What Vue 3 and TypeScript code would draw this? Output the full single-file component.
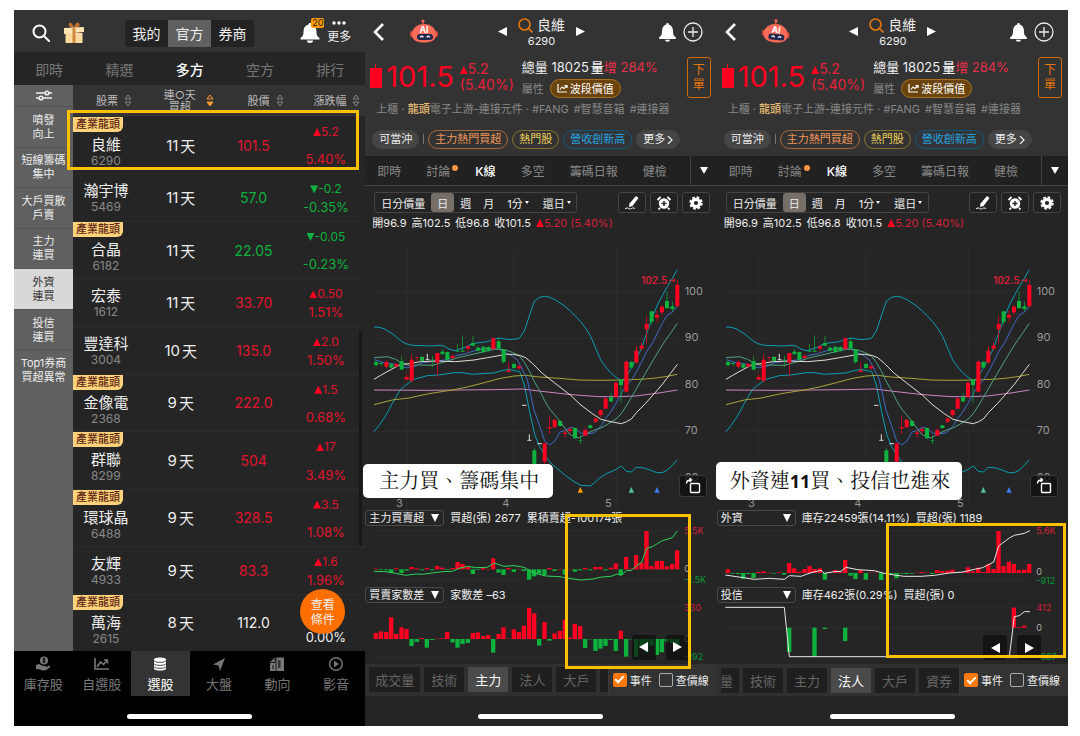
<script setup lang="ts">
import { reactive, ref } from 'vue'

interface Stock {
  name: string
  code: string
  days: string
  price: string
  diff: string
  pct: string
  dir: 'up' | 'down' | 'flat'
  leader?: boolean
  marked?: boolean
}

const groups = ['我的', '官方', '券商']
const activeGroup = ref('官方')
const modes = ['即時', '精選', '多方', '空方', '排行']
const activeMode = ref('多方')
const filters = [
  ['噴發', '向上'],
  ['短線籌碼', '集中'],
  ['大戶買散', '戶賣'],
  ['主力', '連買'],
  ['外資', '連買'],
  ['投信', '連買'],
  ['Top1券商', '買超異常'],
]
const activeFilter = ref(4)

const stocks: Stock[] = [
  { name: '良維', code: '6290', days: '11', price: '101.5', diff: '5.2', pct: '5.40%', dir: 'up', leader: true, marked: true },
  { name: '瀚宇博', code: '5469', days: '11', price: '57.0', diff: '-0.2', pct: '-0.35%', dir: 'down' },
  { name: '合晶', code: '6182', days: '11', price: '22.05', diff: '-0.05', pct: '-0.23%', dir: 'down', leader: true },
  { name: '宏泰', code: '1612', days: '11', price: '33.70', diff: '0.50', pct: '1.51%', dir: 'up' },
  { name: '豐達科', code: '3004', days: '10', price: '135.0', diff: '2.0', pct: '1.50%', dir: 'up' },
  { name: '金像電', code: '2368', days: '9', price: '222.0', diff: '1.5', pct: '0.68%', dir: 'up', leader: true },
  { name: '群聯', code: '8299', days: '9', price: '504', diff: '17', pct: '3.49%', dir: 'up', leader: true },
  { name: '環球晶', code: '6488', days: '9', price: '328.5', diff: '3.5', pct: '1.08%', dir: 'up', leader: true },
  { name: '友輝', code: '4933', days: '9', price: '83.3', diff: '1.6', pct: '1.96%', dir: 'up' },
  { name: '萬海', code: '2615', days: '8', price: '112.0', diff: '', pct: '0.00%', dir: 'flat', leader: true },
]

const navItems = ['庫存股', '自選股', '選股', '大盤', '動向', '影音']
const activeNav = ref('選股')

/* Chart units are thirds of a pixel; one column per trading day. */
const colX = (i: number) => 51 + Math.round(i * 15.32)

type Candle = ['r' | 'g', number, number, number, number] | null
const candles: Candle[] = [
  ['g', 376, 381, 390, 396], ['g', 382, 384, 387, 392], ['r', 375, 381, 395, 400], ['g', 384, 388, 398, 400],
  ['r', 385, 387, 394, 398], ['g', 364, 378, 404, 404], ['r', 415, 426, 434, 434], ['r', 357, 374, 437, 442],
  ['r', 366, 367, 369, 378], ['g', 362, 366, 378, 380], null, ['g', 362, 374, 376, 396],
  ['r', 353, 354, 383, 427], ['g', 343, 350, 357, 360], ['g', 350, 351, 374, 376], ['r', 356, 363, 369, 372],
  ['g', 327, 348, 350, 350], ['g', 301, 347, 350, 350], ['r', 330, 334, 341, 350], ['g', 303, 324, 332, 334],
  ['g', 333, 338, 347, 350], ['g', 334, 335, 351, 354], ['g', 334, 336, 347, 350], ['r', 306, 310, 342, 344],
  ['g', 309, 319, 341, 342], ['g', 341, 342, 381, 387], ['r', 382, 407, 411, 412], ['g', 382, 387, 399, 402],
  ['r', 388, 394, 400, 404], null, null, ['g', 638, 646, 690, 690],
  null, ['r', 624, 625, 680, 690], ['r', 543, 576, 580, 597], ['r', 550, 555, 577, 578],
  ['g', 555, 558, 573, 574], ['r', 585, 593, 597, 610], ['r', 577, 583, 588, 596], ['g', 577, 579, 610, 612],
  ['g', 604, 615, 617, 627], ['r', 578, 585, 602, 603], ['g', 570, 571, 579, 582], ['r', 547, 551, 560, 564],
  ['r', 524, 525, 540, 546], ['r', 486, 491, 521, 522], ['g', 474, 487, 499, 501], ['r', 440, 443, 485, 487],
  ['g', 432, 434, 450, 503], ['r', 377, 380, 470, 472], ['g', 379, 381, 398, 399], ['r', 333, 347, 382, 387],
  ['r', 321, 332, 341, 346], ['r', 243, 267, 283, 326], ['g', 227, 229, 260, 268], ['r', 226, 240, 248, 262],
  ['r', 211, 215, 232, 240], ['g', 170, 198, 219, 222], ['g', 200, 214, 222, 230], ['r', 134, 150, 214, 215],
]

const lines = [
  { cls: 'band', pts: '45,276 60,277 75,281 90,290 105,300 125,317 140,326 160,331 220,333 240,331 255,333 270,342 285,347 300,344 320,336 340,326 360,323 385,320 400,314 420,309 450,314 480,311 496,288 512,240 527,197 542,187 557,184 573,187 588,194 603,204 618,214 635,229 650,244 665,260 680,280 696,306 710,340 726,376 740,396 755,413 771,427 787,436 800,430 815,402 830,375 845,345 862,298 880,247 895,210 910,182 925,155 940,130 955,104' },
  { cls: 'band', pts: '45,590 60,572 80,542 100,505 125,463 150,443 165,433 205,422 240,420 285,413 310,413 340,418 385,415 405,414 425,408 450,403 482,410 496,450 512,530 527,598 542,635 557,660 573,682 590,697 620,722 645,740 665,751 695,753 725,727 742,716 770,704 787,693 802,709 817,711 832,697 850,698 870,704 893,713 910,713 925,705 940,691 955,674' },
  { cls: 'pink', pts: '45,465 200,466 400,464 490,462 540,468 600,475 650,480 720,485 780,485 830,483 860,479 900,474 955,465' },
  { cls: 'yellow', pts: '45,509 100,495 150,489 210,476 280,465 325,456 380,442 420,431 465,423 500,421 540,426 600,430 660,435 720,436 800,435 860,432 890,429 925,424 955,418' },
  { cls: 'blue', pts: '45,374 80,384 110,388 130,396 145,398 165,395 190,383 235,378 265,374 290,362 320,356 345,348 375,341 400,340 420,343 435,350 460,363 475,375 490,403 505,435 525,525 543,575 557,618 572,630 588,618 603,591 618,587 635,577 650,581 665,594 680,597 705,594 725,575 740,550 756,530 771,505 787,475 802,452 817,436 833,410 848,380 863,350 880,325 895,295 910,265 925,240 940,232 955,215' },
  { cls: 'teal', pts: '45,368 85,365 110,373 125,382 150,392 175,390 220,391 260,380 300,367 345,357 375,350 410,342 435,344 460,352 480,361 496,382 512,410 527,442 542,467 557,497 572,522 588,541 603,558 618,580 632,598 650,606 662,608 680,597 700,588 730,577 756,562 771,552 787,536 802,512 817,488 848,434 879,381 910,330 940,287 955,265' },
  { cls: 'cream', pts: '45,433 65,421 90,407 105,399 125,388 150,386 185,380 230,378 290,380 345,375 385,368 420,362 440,358 460,358 485,362 500,368 520,385 550,415 600,454 635,481 663,508 700,536 726,553 750,559 787,566 803,560 817,552 833,532 860,505 885,477 910,448 935,415 955,388' },
]

interface Panel {
  name: string
  stats: string[]
  top: number
  zero: number
  grid: number[]
  labels: { text: string; y: number; cls: string }[]
  bars: number[]
  line?: string
  lineCls?: string
}

interface Phone {
  key: string
  caption: string[]
  panels: Panel[]
  tab: string
  orangeMark: boolean
}

const phones: Phone[] = [
  {
    key: 'main',
    caption: ['主力買、籌碼集中'],
    tab: '主力',
    orangeMark: true,
    panels: [
      {
        name: '主力買賣超',
        stats: ['買超(張) 2677', '累積賣超-100174張'],
        top: 78,
        zero: 208,
        grid: [92, 208, 240],
        labels: [
          { text: '5.5K', y: 92, cls: 'up' },
          { text: '0', y: 208, cls: 'mid' },
          { text: '-1.5K', y: 240, cls: 'down' },
        ],
        bars: [2, -2, -3, -10, 3, -11, -4, 7, 3, -3, 4, -3, 10, 5, -2, 4, 22, 16, 8, -14, -2, 5, 1, 33, -10, -17, 4, -8, 1, -5, -31, -21, -13, -18, 4, -5, 1, -16, 1, -7, -3, 4, -3, 7, 7, -3, 5, 18, -17, 37, 2, 43, 20, 115, 10, 25, 25, 9, 16, 57],
        line: '45,214 80,215 110,220 140,226 170,222 190,223 220,219 250,215 280,214 300,205 325,199 350,203 385,202 405,189 435,199 465,197 495,202 515,214 530,220 560,228 600,230 630,235 665,240 700,237 730,231 756,229 775,222 787,226 802,212 817,211 833,197 848,187 863,145 880,140 895,131 910,122 940,113 955,93',
        lineCls: 'lime',
      },
      {
        name: '買賣家數差',
        stats: ['家數差 –63'],
        top: 309,
        zero: 417,
        grid: [322, 417, 472],
        labels: [
          { text: '330', y: 324, cls: 'up' },
          { text: '0', y: 417, cls: 'mid' },
          { text: '-192', y: 472, cls: 'down' },
        ],
        bars: [18, 23, 21, 65, 15, 35, 30, -21, -9, 3, -26, -3, 1, 2, 21, -10, -26, -15, -12, 18, 20, 9, 12, -41, 15, 35, 1, 29, 21, 40, 93, 77, -20, 51, -5, 17, 24, 58, 4, 45, 39, -27, -1, -36, -29, -21, -3, -36, 25, -53, -1, -53, -25, -40, -20, -48, -40, -8, -12, -22],
      },
    ],
  },
  {
    key: 'inst',
    caption: ['外資連', '11', '買、投信也進來'],
    tab: '法人',
    orangeMark: false,
    panels: [
      {
        name: '外資',
        stats: ['庫存22459張(14.11%)', '買超(張) 1189'],
        top: 78,
        zero: 219,
        grid: [92, 219, 240],
        labels: [
          { text: '5.6K', y: 93, cls: 'up' },
          { text: '0', y: 217, cls: 'mid' },
          { text: '-912', y: 242, cls: 'down' },
        ],
        bars: [11, -2, -3, -17, -3, -15, 3, 5, 1, -2, 2, -5, 30, 14, 4, 12, 21, 12, 14, -20, 2, 9, 3, 39, -8, -18, 9, -20, 1, 1, -21, -2, -3, -16, -2, -3, -2, 1, 3, 1, -3, 9, 6, 7, 10, 2, 2, 17, 5, 16, 3, 27, 12, 126, 21, 34, 27, 9, 10, 27],
        line: '43,225 90,232 130,238 175,235 220,238 235,227 270,229 300,218 330,211 340,220 370,215 390,214 405,202 440,209 490,212 520,220 550,225 580,229 630,229 670,226 715,219 756,216 790,208 815,203 848,186 863,138 895,114 910,106 940,100 957,92',
        lineCls: 'white',
      },
      {
        name: '投信',
        stats: ['庫存462張(0.29%)', '買超(張) 0'],
        top: 309,
        zero: 383,
        grid: [322, 383, 472],
        labels: [
          { text: '412', y: 324, cls: 'up' },
          { text: '0', y: 384, cls: 'mid' },
          { text: '-607', y: 472, cls: 'down' },
        ],
        bars: Array.from({ length: 60 }, (_, i) => (({ 12: -73, 17: -86, 19: -4, 23: -40, 56: 60, 57: 2, 58: 6 }) as Record<number, number>)[i] ?? 0),
        line: '43,322 220,322 235,470 895,470 910,350 925,347 940,335 957,335',
        lineCls: 'white',
      },
    ],
  },
]

const pageTabs = ['即時', '討論', 'K線', '多空', '籌碼日報', '健檢']
const ranges = ['日分價量', '日', '週', '月', '1分', '還日']
const panelTabs = ['成交量', '技術', '主力', '法人', '大戶', '資券']
const chips = [
  { text: '主力熱門買超', cls: 'orange' },
  { text: '熱門股', cls: 'gold' },
  { text: '營收創新高', cls: 'sky' },
]
const checks = reactive([
  { event: true, price: false },
  { event: true, price: false },
])
const barY = (v: number, zero: number) => (v > 0 ? zero - v : zero)
</script>

<template>
  <main class="board">
    <section class="phone list-phone">
      <header class="bar">
        <button class="ico" aria-label="搜尋">
          <svg width="18" height="18" viewBox="0 0 18 18" fill="none" stroke="#fff" stroke-width="2"><circle cx="7.5" cy="7.5" r="6" /><path d="M12 12l5 5" stroke-linecap="round" /></svg>
        </button>
        <button class="ico gift" aria-label="禮物">
          <svg width="20" height="22" viewBox="0 0 20 22">
            <path d="M10 6C7 6 4 4 5 1.500S9 2 10 6c1-4 3-7 5-4.500S14 6 10 6z" fill="#c4732c" />
            <path d="M1.500 11h17v10h-17z" fill="#fbd9a0" /><path d="M0 6l20-1v5l-20 2z" fill="#ffe3b3" />
            <path d="M8.500 6h3v15h-3z" fill="#d08a3e" />
          </svg>
        </button>
        <div class="segments">
          <button v-for="g in groups" :key="g" :class="{ on: g === activeGroup }" @click="activeGroup = g">{{ g }}</button>
        </div>
        <button class="ico alert" aria-label="通知">
          <svg width="20" height="20" viewBox="0 0 20 20" fill="#fff"><path d="M10 0c1 0 1.500.7 1.500 1.500C15 2.400 16.500 5 16.500 9c0 3.500 1 4.500 3 6v1.500H.5V15c2-1.500 3-2.500 3-6 0-4 1.500-6.600 5-7.500C8.500.7 9 0 10 0zM7 17.500h6a3 2.500 0 0 1-6 0z" /></svg>
          <span class="count">20</span>
        </button>
        <button class="more">
          <svg width="14" height="4" viewBox="0 0 14 4" fill="#fff"><circle cx="2" cy="2" r="1.700" /><circle cx="7" cy="2" r="1.700" /><circle cx="12" cy="2" r="1.700" /></svg>
          <span>更多</span>
        </button>
      </header>
      <nav class="modes">
        <button v-for="m in modes" :key="m" :class="{ on: m === activeMode }" @click="activeMode = m">{{ m }}</button>
      </nav>
      <div class="body">
        <aside class="side">
          <button class="tune" aria-label="篩選">
            <svg width="16" height="11" viewBox="0 0 16 11" fill="none" stroke="#eee" stroke-width="1.500"><path d="M0 3h9M13 3h3M0 8h3M7 8h9" /><circle cx="11" cy="3" r="1.800" /><circle cx="5" cy="8" r="1.800" /></svg>
          </button>
          <div class="filters">
            <button v-for="(f, i) in filters" :key="i" :class="{ on: i === activeFilter }" @click="activeFilter = i">
              <span v-for="t in f" :key="t">{{ t }}</span>
            </button>
          </div>
        </aside>
        <div class="table-wrap">
          <table>
            <thead>
              <tr>
                <th v-for="(h, i) in [['股票'], ['連○天', '買超'], ['股價'], ['漲跌幅']]" :key="i" scope="col">
                  <span class="head-text"><span v-for="t in h" :key="t">{{ t }}</span></span>
                  <svg class="sort" :class="{ active: i === 1 }" width="8" height="13" viewBox="0 0 8 13"><path class="asc" d="M1 5l3-4 3 4z" /><path class="desc" d="M1 8l3 4 3-4z" /></svg>
                </th>
              </tr>
            </thead>
            <tbody>
              <tr v-for="s in stocks" :key="s.code" :class="[s.dir, { leader: s.leader, marked: s.marked }]">
                <td class="who">
                  <span v-if="s.leader" class="badge">產業龍頭</span>
                  <span class="name">{{ s.name }}</span>
                  <span class="code">{{ s.code }}</span>
                </td>
                <td class="days">{{ s.days }}<span>天</span></td>
                <td class="price">{{ s.price }}</td>
                <td class="change">
                  <span class="diff"><template v-if="s.diff"><i class="tri" :class="s.dir"></i>{{ s.diff }}</template></span>
                  <span>{{ s.pct }}</span>
                </td>
              </tr>
            </tbody>
          </table>
          <span class="scroll"></span>
          <button class="fab"><span>查看</span><span>條件</span></button>
        </div>
      </div>
      <nav class="tabbar">
        <button v-for="(n, i) in navItems" :key="n" :class="{ on: n === activeNav }" @click="activeNav = n">
          <svg width="16" height="16" viewBox="0 0 16 16" fill="currentColor">
            <template v-if="i === 0"><circle cx="9" cy="4.500" r="4" /><path d="M10.500 3c-2-1-3.500.7-1.500 1.500s.6 2.500-1.600 1.400M9 1.800v5.400" fill="none" stroke="#000" /><path d="M1 9l3-1 4 2h3v1.500H8c3 .5 4-1 6-2 1 0 1.500.8 1 1.500-2 2-4 3.500-6 3.500-3 0-4-1.500-8-1.500z" /></template>
            <path v-else-if="i === 1" d="M1 2v11h14M3 11l3.500-5 3 2.500L13 4.500M10 4h3.500v3.500" fill="none" stroke="currentColor" stroke-width="1.600" />
            <template v-else-if="i === 2"><path d="M2 3.500C2 .7 14 .7 14 3.500v9c0 2.800-12 2.800-12 0z" /><path d="M2 4.500c0 2.500 12 2.500 12 0M2 7.500c0 2.500 12 2.500 12 0M2 10.500c0 2.500 12 2.500 12 0" fill="none" stroke="#333" stroke-width=".9" /></template>
            <path v-else-if="i === 3" d="M14 2L2 8.500l5.500 1L9 15z" />
            <template v-else-if="i === 4"><path d="M1 6l5-4.500h9V15H1z" /><path d="M7 1v14M1 6.500h5V2" fill="none" stroke="#000" stroke-width=".8" /><path d="M9 4h2.500v8H9z" fill="#333" /><path d="M3 9h2v4H3z" fill="#444" /></template>
            <template v-else><circle cx="8" cy="8" r="6.300" fill="none" stroke="currentColor" stroke-width="1.400" /><path d="M6 4.700l5 3.300-5 3.300z" /></template>
          </svg>
          <span>{{ n }}</span>
        </button>
      </nav>
      <div class="home black"><span></span></div>
    </section>

    <section v-for="(p, pi) in phones" :key="p.key" class="phone detail" :class="p.key">
      <header class="bar">
        <button class="ico" aria-label="返回">
          <svg width="12" height="18" viewBox="0 0 12 18" fill="none" stroke="#fff" stroke-width="2.600"><path d="M10 1L2 9l8 8" /></svg>
        </button>
        <button class="ico robot" aria-label="AI">
          <svg width="28" height="24" viewBox="0 0 28 24">
            <circle cx="13" cy="2" r="1.600" fill="#ff6152" /><path d="M13 3v4" stroke="#ff6152" stroke-width="1.200" />
            <rect x="0" y="12" width="4" height="6" rx="2" fill="#d64a40" /><rect x="24" y="12" width="4" height="6" rx="2" fill="#d64a40" />
            <path d="M14 5c7 0 12 4.500 12 10.500 0 6-5 8-12 8S2 21.500 2 15.500C2 9.500 7 5 14 5z" fill="#ff6b57" />
            <text x="14" y="14" text-anchor="middle" class="ai">AI</text>
            <rect x="7" y="15" width="16" height="6" rx="3" fill="#23284f" />
            <path d="M10.500 18.500a1.300 1.300 0 0 1 2.600 0M17 18.500a1.300 1.300 0 0 1 2.600 0" fill="none" stroke="#fff" stroke-width="1.300" />
          </svg>
        </button>
        <div class="title">
          <button class="ico" aria-label="上一檔"><svg width="10" height="10" viewBox="0 0 10 10" fill="#fff"><path d="M9 0v9L0 4.500z" /></svg></button>
          <div class="who-now">
            <div class="who-name">
              <svg width="15" height="15" viewBox="0 0 15 15" fill="none" stroke="#e8760a" stroke-width="1.600"><circle cx="6.500" cy="6.500" r="5.500" /><path d="M10.500 10.500l4 4" /></svg>
              <span>良維</span>
            </div>
            <span class="who-code">6290</span>
          </div>
          <button class="ico" aria-label="下一檔"><svg width="10" height="10" viewBox="0 0 10 10" fill="#fff"><path d="M1 0v9l9-4.500z" /></svg></button>
        </div>
        <button class="ico" aria-label="通知">
          <svg width="17" height="19" viewBox="0 0 17 19" fill="#fff"><path d="M8.500 0c.8 0 1.300.6 1.300 1.400 3 .8 4.200 3.300 4.200 7 0 3.200.8 4.400 2.800 5.800V16H.2v-1.800C2.200 12.800 3 11.600 3 8.400c0-3.700 1.200-6.200 4.200-7C7.200.6 7.700 0 8.500 0zM6 16.700h5a2.500 2 0 0 1-5 0z" /></svg>
        </button>
        <button class="ico" aria-label="加入">
          <svg width="20" height="20" viewBox="0 0 20 20" fill="none" stroke="#eee" stroke-width="1.300"><circle cx="10" cy="10" r="9" /><path d="M10 5v10M5 10h10" /></svg>
        </button>
      </header>

      <div class="quote">
        <svg class="candle" width="12" height="26" viewBox="0 0 12 26" fill="#ff0020"><path d="M0 4h12v20H0zM5 0h1v24H5z" /></svg>
        <strong>101.5</strong>
        <div class="move"><span><i class="tri up"></i>5.2</span><span>(5.40%)</span></div>
        <div class="facts">
          <div class="volume">總量 18025<b>量</b><em>增 284%</em></div>
          <div class="attr">
            <span>屬性</span>
            <button class="value-pill">
              <svg width="11" height="9" viewBox="0 0 11 9" fill="none" stroke="#fff" stroke-width="1.200"><path d="M1 0v8h9M3 5.500l2-2.500 2 1.500L9.500 2M7.500 1.500H10V4" /></svg>
              波段價值
            </button>
          </div>
        </div>
        <button class="order"><span>下</span><span>單</span></button>
      </div>
      <div class="tagline"><span>上櫃 · <b>龍頭</b>電子上游-連接元件 · #FANG</span><span>#智慧音箱</span><span>#連接器</span></div>
      <div class="chips">
        <span class="chip solid">可當沖</span><span class="sep"></span>
        <button v-for="c in chips" :key="c.text" class="chip" :class="c.cls">{{ c.text }}</button>
        <button class="chip solid">更多 <svg width="6" height="8" viewBox="0 0 6 8" fill="none" stroke="#eee" stroke-width="1.200"><path d="M1 0l4 4-4 4" /></svg></button>
      </div>

      <nav class="page-tabs">
        <div class="page-items">
          <button v-for="t in pageTabs" :key="t" :class="{ on: t === 'K線', dot: t === '討論' }">{{ t }}</button>
        </div>
        <button class="fold" aria-label="展開"><svg width="8" height="7" viewBox="0 0 8 7" fill="#fff"><path d="M0 0h8L4 7z" /></svg></button>
      </nav>

      <div class="tools">
        <div class="ranges">
          <button v-for="(r, i) in ranges" :key="r" :class="{ on: r === '日' }">{{ r }}<svg v-if="i > 3" width="4" height="3" viewBox="0 0 4 3" fill="#fff"><path d="M0 0h4L2 3z" /></svg></button>
        </div>
        <button class="tool" aria-label="畫線"><svg width="14" height="14" viewBox="0 0 14 14" fill="#fff"><path d="M11 0l2.500 2-6 8L4 11l.5-3.500z" /><path d="M0 13c3-3 4 1.500 6.500-.5 1.500-1 2-.5 3.500 0" fill="none" stroke="#fff" /></svg></button>
        <button class="tool" aria-label="鬧鐘"><svg width="14" height="14" viewBox="0 0 14 14" fill="#fff"><circle cx="7" cy="7.500" r="5.200" /><path d="M7 5v5M4.500 7.500h5" stroke="#222" stroke-width="1.400" /><path d="M.5 4L3.500 1M13.500 4l-3-3M3 12l-1.500 1.500M11 12l1.500 1.500" stroke="#fff" stroke-width="1.800" /></svg></button>
        <button class="tool" aria-label="設定"><svg width="14" height="14" viewBox="0 0 14 14"><circle cx="7" cy="7" r="3.700" fill="none" stroke="#fff" stroke-width="3.200" /><circle cx="7" cy="7" r="5.800" fill="none" stroke="#fff" stroke-width="1.800" stroke-dasharray="2.600 1.955" /></svg></button>
      </div>
      <div class="ohlc"><span>開96.9</span><span>高102.5</span><span>低96.8</span><span>收101.5</span><span class="rise"><i class="tri up"></i>5.20 (5.40%)</span></div>

      <div class="k-chart">
        <svg viewBox="18 0 1054 825">
          <path class="grid-line" d="M45 170H960M45 310H960M45 450H960M45 589H960M45 729H960M143 40V825M465 40V825M772 40V825" />
          <polyline v-for="(l, i) in lines" :key="i" class="curve" :class="l.cls" :points="l.pts" />
          <template v-for="(c, i) in candles" :key="i">
            <g v-if="c" :class="c[0]">
              <rect :x="colX(i) - 1" :y="c[1]" width="2" :height="c[4] - c[1]" />
              <rect :x="colX(i) - 6" :y="c[2]" width="12" :height="c[3] - c[2]" />
            </g>
          </template>
          <path class="doji" d="M205 356v17M200 374h11M489 511h14M511 598v17M505 616h12M535 626h14" />
          <path v-if="p.orangeMark" d="M656 773l8-17 8 17z" fill="#ff9800" />
          <path d="M809 773l8-17 8 17z" fill="#4fc3a1" />
          <path d="M886 773l8-17 8 17z" fill="#3f7ff0" />
          <text class="peak" x="846" y="146">102.5</text>
          <path class="arrow" d="M930 136h18M941 130l8 6-8 6" />
          <g class="axis">
            <text x="977" y="179">100</text><text x="977" y="319">90</text><text x="977" y="459">80</text><text x="977" y="598">70</text><text x="977" y="738">60</text>
            <text x="111" y="817">3</text><text x="430" y="817">4</text><text x="738" y="817">5</text>
          </g>
        </svg>
        <button class="rotate" aria-label="橫向檢視">
          <svg width="16" height="16" viewBox="0 0 16 16" fill="none" stroke="#fff" stroke-width="1.400"><rect x="5.500" y="5.500" width="9" height="9" rx="1" /><path d="M1.500 5.500C1.500 3 3 2 6 2M4.500 0l2 2-2 2" /></svg>
        </button>
        <div class="caption"><span v-for="t in p.caption" :key="t" :class="{ num: t === '11' }">{{ t }}</span></div>
      </div>

      <div class="panels">
        <div v-for="(n, ni) in p.panels" :key="n.name" class="panel">
          <div class="panel-head">
            <label class="pick">
              <select :aria-label="n.name"><option>{{ n.name }}</option></select>
              <svg width="8" height="8" viewBox="0 0 8 8" fill="#fff"><path d="M0 0h8L4 8z" /></svg>
            </label>
            <span v-for="s in n.stats" :key="s">{{ s }}</span>
          </div>
          <svg :viewBox="`18 ${n.top} 1054 183`">
            <path v-for="g in n.grid" :key="g" class="grid-line" :d="`M45 ${g}H960`" />
            <template v-for="(v, i) in n.bars" :key="i">
              <rect v-if="v" :class="v > 0 ? 'r' : 'g'" :x="colX(i) - 7" :y="barY(v, n.zero)" width="13" :height="Math.abs(v)" />
            </template>
            <polyline v-if="n.line" class="curve" :class="n.lineCls" :points="n.line" />
            <text v-for="l in n.labels" :key="l.text" class="scale" :class="l.cls" x="976" :y="l.y + 9">{{ l.text }}</text>
          </svg>
          <div v-if="ni === 1" class="pager">
            <button aria-label="往前"><svg width="9" height="10" viewBox="0 0 9 10" fill="#fff"><path d="M9 0v10L0 5z" /></svg></button>
            <button aria-label="往後"><svg width="9" height="10" viewBox="0 0 9 10" fill="#fff"><path d="M0 0v10l9-5z" /></svg></button>
          </div>
        </div>
        <span class="frame"></span>
      </div>

      <div class="panel-tabs">
        <div class="strip">
          <button v-for="t in panelTabs" :key="t" :class="{ on: t === p.tab }">{{ t }}</button>
        </div>
        <div class="checks">
          <label><input v-model="checks[pi].event" type="checkbox" />事件</label>
          <label><input v-model="checks[pi].price" type="checkbox" />查價線</label>
        </div>
      </div>
      <div class="home"><span></span></div>
    </section>
  </main>
</template>

<style>
body {
  margin: 0;
  background: #fff;
}
</style>

<style scoped>
.board {
  display: grid;
  grid-template-columns: repeat(3, minmax(0, 1fr));
  padding: 10px 12px 10px 14px;
  font-family: Inter, "Noto Sans CJK TC", sans-serif;
  color: #eee;
}
.board * {
  box-sizing: border-box;
}
.board svg {
  display: block;
  flex: none;
}
button {
  border: 0;
  padding: 0;
  background: none;
  color: inherit;
  font: inherit;
  white-space: nowrap;
  cursor: pointer;
}
.phone {
  display: flex;
  flex-direction: column;
  min-width: 0;
  background: #252525;
}
.bar {
  display: flex;
  align-items: center;
  height: 42px;
  background: #333;
}
.ico {
  position: relative;
  display: flex;
}
.tri {
  display: inline-block;
  width: 8px;
  height: 8px;
  background: #ff0020;
  clip-path: polygon(50% 0, 100% 100%, 0 100%);
}
.tri.down {
  background: #0db33c;
  clip-path: polygon(0 0, 100% 0, 50% 100%);
}

/* stock picker */
.list-phone .bar {
  padding: 4px 14px 0 18px;
}
.gift {
  margin-left: 14px;
}
.segments {
  display: flex;
  margin: 0 auto 0 41px;
  border-radius: 3px;
  overflow: hidden;
  background: #232323;
}
.segments button {
  width: 43px;
  height: 27px;
  font-size: 14px;
}
.segments .on {
  background: #606060;
}
.count {
  position: absolute;
  left: 11px;
  top: -5px;
  padding: 0 1px;
  border-radius: 2px;
  background: #f90;
  color: #222;
  font-size: 9px;
  line-height: 10px;
}
.more {
  display: flex;
  flex-direction: column;
  align-items: center;
  gap: 4px;
  margin-left: 7px;
  font-size: 12px;
  line-height: 16px;
}
.modes {
  display: grid;
  grid-template-columns: repeat(5, 1fr);
  height: 33px;
}
.modes button {
  color: #777;
  font-size: 14px;
}
.modes .on {
  color: #fff;
  font-weight: 500;
}
.body {
  display: flex;
  flex: 1;
}
.side {
  width: 59px;
  background: #606060;
}
.tune {
  display: grid;
  place-items: center;
  width: 100%;
  height: 21px;
}
.filters {
  display: grid;
  grid-template-rows: repeat(7, 1fr);
  height: 284px;
}
.filters button {
  display: flex;
  flex-direction: column;
  align-items: center;
  justify-content: center;
  border-top: 1px solid #555;
  font-size: 11px;
  line-height: 14px;
}
.filters .on {
  background: #d8d8d8;
  color: #333;
}
.table-wrap {
  position: relative;
  display: flex;
  flex: 1;
}
table,
tbody {
  display: flex;
  flex-direction: column;
  flex: 1;
}
thead {
  display: block;
}
tr {
  display: grid;
  grid-template-columns: 66fr 84fr 62fr 81fr;
}
thead tr {
  height: 31px;
  background: #333;
}
th {
  display: flex;
  align-items: center;
  justify-content: center;
  gap: 6px;
  padding: 0 0 0 16px;
  font-size: 11px;
  line-height: 12px;
  font-weight: 400;
  color: #bbb;
  white-space: nowrap;
}
th:nth-child(2) {
  gap: 10px;
}
th:nth-child(n + 3) {
  padding-left: 24px;
}
.head-text {
  display: flex;
  flex-direction: column;
  align-items: center;
}
.sort path {
  fill: none;
  stroke: #888;
}
.sort.active path {
  stroke: #f93;
}
.sort.active .desc {
  fill: #f93;
}
tbody tr {
  position: relative;
  flex: 48 0 0;
  border-top: 1px solid #2b2b2b;
}
tbody tr.leader {
  flex-grow: 58;
}
.marked::after {
  content: "";
  position: absolute;
  z-index: 2;
  inset: -7px 6px 3px -6px;
  border: 3px solid #ffc000;
}
td {
  display: flex;
  align-items: center;
  justify-content: center;
  padding: 0;
  font-size: 14px;
}
.who {
  flex-direction: column;
  justify-content: flex-start;
  padding-top: 8px;
}
.leader .who {
  padding-top: 0;
}
.badge {
  align-self: flex-start;
  margin-bottom: 4px;
  padding: 0 3px;
  border-radius: 0 0 6px 0;
  background: #fdd27a;
  color: #5c2413;
  font-size: 11px;
  line-height: 15px;
  font-weight: 500;
  white-space: nowrap;
}
.name {
  font-size: 15px;
  line-height: 18px;
}
.code {
  color: #888;
  font-size: 12px;
  line-height: 14px;
}
.days {
  gap: 2px;
  font-size: 15px;
}
.up .price,
.up .change {
  color: #e2142d;
}
.down .price,
.down .change {
  color: #0db33c;
}
.change {
  flex-direction: column;
  justify-content: space-between;
  padding: 7px 0 6px 2px;
  font-size: 13px;
  line-height: 16px;
}
.diff {
  min-height: 16px;
  font-size: 12px;
}
.scroll {
  position: absolute;
  right: 3px;
  top: 245px;
  width: 3px;
  height: 216px;
  border-radius: 2px;
  background: #181818;
}
.fab {
  position: absolute;
  right: 20px;
  bottom: 17px;
  display: flex;
  flex-direction: column;
  align-items: center;
  justify-content: center;
  width: 45px;
  height: 45px;
  border-radius: 50%;
  background: #ff6f00;
  font-size: 12px;
  line-height: 15px;
}
.tabbar {
  display: grid;
  grid-template-columns: repeat(6, 1fr);
  height: 45px;
  background: #000;
}
.tabbar button {
  display: flex;
  flex-direction: column;
  align-items: center;
  gap: 3px;
  padding-top: 5px;
  color: #777;
  font-size: 13px;
  line-height: 18px;
}
.tabbar .on {
  background: #333;
  color: #fff;
}
.home {
  display: flex;
  justify-content: center;
  height: 30px;
  padding-top: 18px;
}
.home.black {
  background: #000;
}
.home span {
  width: 125px;
  height: 5px;
  border-radius: 3px;
  background: #fff;
}

/* stock detail */
.detail .bar {
  gap: 7px;
  padding: 2px 14px 0 8px;
}
.robot {
  margin: 0 0 2px 18px;
}
.inst .robot svg {
  transform: rotate(6deg);
}
.ai {
  fill: #fff;
  font-size: 9px;
  font-weight: 700;
}
.title {
  display: flex;
  align-items: center;
  justify-content: center;
  flex: 1;
  gap: 10px;
  padding-right: 14px;
}
.who-now {
  display: flex;
  flex-direction: column;
  align-items: center;
}
.who-name {
  display: flex;
  align-items: center;
  gap: 4px;
  font-size: 14px;
  line-height: 18px;
}
.who-code {
  font-size: 11px;
  line-height: 14px;
}
.quote {
  display: flex;
  align-items: center;
  height: 48px;
  padding: 2px 6px 0 5px;
  background: #333;
}
.quote strong {
  margin-left: 4px;
  color: #ff0020;
  font-size: 29px;
  line-height: 32px;
  font-weight: 400;
}
.move {
  display: flex;
  flex-direction: column;
  margin-left: 6px;
  color: #e8203a;
  font-size: 14px;
  line-height: 16px;
  white-space: nowrap;
}
.facts {
  display: flex;
  flex-direction: column;
  flex: 1;
  gap: 2px;
  margin-left: 8px;
  white-space: nowrap;
}
.volume {
  font-size: 13px;
  line-height: 20px;
}
.volume b {
  margin-left: 2px;
  font-weight: 500;
}
.volume em {
  font-style: normal;
  color: #e8304a;
}
.attr {
  display: flex;
  align-items: center;
  gap: 6px;
  color: #888;
  font-size: 11px;
}
.value-pill {
  display: flex;
  align-items: center;
  gap: 2px;
  height: 19px;
  padding: 0 6px;
  border: 1px solid #a8731c;
  border-radius: 10px;
  background: #6b430c;
  color: #fff;
}
.order {
  display: flex;
  flex-direction: column;
  align-items: center;
  justify-content: center;
  width: 24px;
  height: 41px;
  border: 1px solid #d2690a;
  border-radius: 3px;
  color: #e8760a;
  font-size: 12px;
  line-height: 15px;
}
.tagline {
  display: flex;
  gap: 5px;
  height: 30px;
  padding: 1px 0 0 11px;
  background: #333;
  color: #888;
  font-size: 11px;
  line-height: 17px;
  white-space: nowrap;
}
.tagline b {
  color: #e9bd74;
  font-weight: 500;
}
.chips {
  display: flex;
  gap: 4px;
  height: 26px;
  padding-left: 7px;
  background: #333;
}
.chip {
  display: flex;
  align-items: center;
  gap: 2px;
  height: 19px;
  padding: 0 6px;
  border: 1px solid;
  border-radius: 10px;
  font-size: 11px;
  line-height: 17px;
  white-space: nowrap;
}
.chip.solid {
  border-color: #454545;
  background: #454545;
}
.sep {
  width: 1px;
  height: 10px;
  margin-top: 4px;
  background: #777;
}
.orange {
  color: #f0965a;
  border-color: #a8683c;
}
.gold {
  color: #ecd05a;
  border-color: #86742c;
}
.sky {
  color: #25a3e0;
  border-color: #12587c;
}
.page-tabs {
  display: flex;
  height: 30px;
  border-bottom: 1px solid #444;
  background: #212121;
}
.page-items {
  display: flex;
  flex: 1;
  gap: 25px;
  padding-left: 12px;
}
.page-tabs button {
  position: relative;
  color: #888;
  font-size: 12px;
}
.page-tabs .on {
  color: #fff;
  font-weight: 500;
}
.dot::after {
  content: "";
  position: absolute;
  right: -8px;
  top: 9px;
  width: 6px;
  height: 6px;
  border-radius: 50%;
  background: #ff9540;
}
.fold {
  display: grid;
  place-items: center;
  width: 27px;
  border-left: 1px solid #444;
}
.tools {
  display: flex;
  gap: 4px;
  padding: 6px 7px 0 9px;
}
.ranges {
  display: flex;
  width: 203px;
  height: 21px;
  margin-right: auto;
  border: 1px solid #444;
  border-radius: 3px;
  font-size: 11px;
}
.ranges button {
  display: flex;
  align-items: center;
  justify-content: center;
  gap: 2px;
  padding: 0 6px;
}
.ranges button:nth-child(n + 5) {
  padding: 0 7px;
}
.ranges .on {
  border-radius: 3px;
  background: #766f68;
}
.tool {
  display: grid;
  place-items: center;
  width: 28px;
  height: 21px;
  border: 1px solid #444;
  border-radius: 3px;
  background: #222;
}
.ohlc {
  display: flex;
  gap: 5px;
  height: 22px;
  padding-left: 7px;
  font-size: 11px;
  line-height: 20px;
  white-space: nowrap;
}
.rise {
  color: #d8203a;
}
.k-chart {
  position: relative;
}
.k-chart > svg,
.panel > svg {
  width: 100%;
}
.grid-line {
  fill: none;
  stroke: #313131;
  stroke-width: 2;
}
.curve {
  fill: none;
  stroke-width: 3;
  stroke-linejoin: round;
}
.band { stroke: #0a9fb4; }
.pink { stroke: #cf85c0; }
.yellow { stroke: #a8a434; }
.blue { stroke: #4169c8; }
.teal { stroke: #4fa384; }
.cream { stroke: #e6ddd2; }
.lime { stroke: #2fd45c; }
.white { stroke: #e6e6e6; }
.r { fill: #ff0020; }
.g { fill: #0db33c; }
.doji,
.arrow {
  fill: none;
  stroke: #ddd;
  stroke-width: 3;
}
.arrow {
  stroke: #d8203a;
}
.peak {
  fill: #d8203a;
  font-size: 30px;
  font-weight: 600;
}
.axis {
  fill: #999;
  font-size: 33px;
}
.scale {
  font-size: 27px;
}
.scale.up { fill: #d8203a; }
.scale.mid { fill: #aaa; }
.scale.down { fill: #0c9a38; }
.rotate {
  position: absolute;
  right: 10px;
  bottom: 13px;
  display: grid;
  place-items: center;
  width: 28px;
  height: 22px;
  border: 1px solid #3a3a3a;
  border-radius: 3px;
  background: rgba(15, 15, 15, 0.8);
}
.caption {
  position: absolute;
  z-index: 1;
  left: -2px;
  bottom: 12px;
  padding: 0 14px 0 16px;
  border-radius: 5px;
  background: #fff;
  color: #111;
  font-family: "Liberation Serif", "Noto Serif CJK TC", "Noto Sans CJK TC", serif;
  font-size: 20px;
  line-height: 34px;
  white-space: nowrap;
}
.inst .caption {
  left: -1px;
  bottom: 10px;
  padding: 0 12px 0 14px;
  line-height: 38px;
}
.caption .num {
  font-family: "Open Sans", sans-serif;
  font-size: 18px;
  font-weight: 700;
}
.panels {
  position: relative;
}
.panel {
  position: relative;
}
.panel-head {
  display: flex;
  gap: 6px;
  height: 16px;
  font-size: 11px;
  line-height: 16px;
  white-space: nowrap;
}
.pick {
  position: relative;
  display: block;
  width: 79px;
}
.pick select {
  appearance: none;
  display: block;
  width: 100%;
  height: 16px;
  padding: 0 3px;
  border: 1px solid #4a4a4a;
  border-radius: 3px;
  background: transparent;
  color: #eee;
  font: inherit;
  line-height: 14px;
}
.pick svg {
  position: absolute;
  right: 5px;
  top: 4px;
  pointer-events: none;
}
.pager {
  position: absolute;
  right: 27px;
  bottom: 4px;
  display: flex;
  gap: 10px;
}
.pager button {
  display: grid;
  place-items: center;
  width: 24px;
  height: 25px;
  border-radius: 3px;
  background: rgba(10, 10, 10, 0.65);
}
.frame {
  position: absolute;
  z-index: 1;
  inset: 4px 26px -5px 200px;
  border: 3px solid #ffc000;
  pointer-events: none;
}
.inst .frame {
  inset: 13px 2px 6px 169px;
}
.panel-tabs {
  display: flex;
  height: 32px;
  background: #303030;
}
.strip {
  display: flex;
  align-items: center;
  flex: 1;
  gap: 4px;
  min-width: 0;
  margin-left: 4px;
  overflow: hidden;
}
.inst .strip {
  justify-content: flex-end;
}
.strip button {
  flex: none;
  height: 25px;
  padding: 0 7px;
  background: #1f1f1f;
  color: #666;
  font-size: 13px;
}
.strip button:first-child {
  padding: 0 6px;
}
.strip .on {
  background: #4a4a4a;
  color: #fff;
}
.checks {
  display: flex;
  align-items: center;
  gap: 7px;
  padding: 0 8px 0 4px;
  border-left: 1px solid #3a3a3a;
  background: #333;
  font-size: 11px;
  white-space: nowrap;
}
.checks label {
  display: flex;
  align-items: center;
  gap: 3px;
}
.checks input {
  appearance: none;
  display: grid;
  place-items: center;
  width: 14px;
  height: 14px;
  margin: 0;
  border: 1px solid #aaa;
  border-radius: 2px;
}
.checks input:checked {
  border-color: #ff7a0a;
  background: #ff7a0a;
}
.checks input:checked::after {
  content: "";
  width: 7px;
  height: 3px;
  margin-bottom: 2px;
  border: solid #fff;
  border-width: 0 0 2px 2px;
  transform: rotate(-45deg);
}
</style>
